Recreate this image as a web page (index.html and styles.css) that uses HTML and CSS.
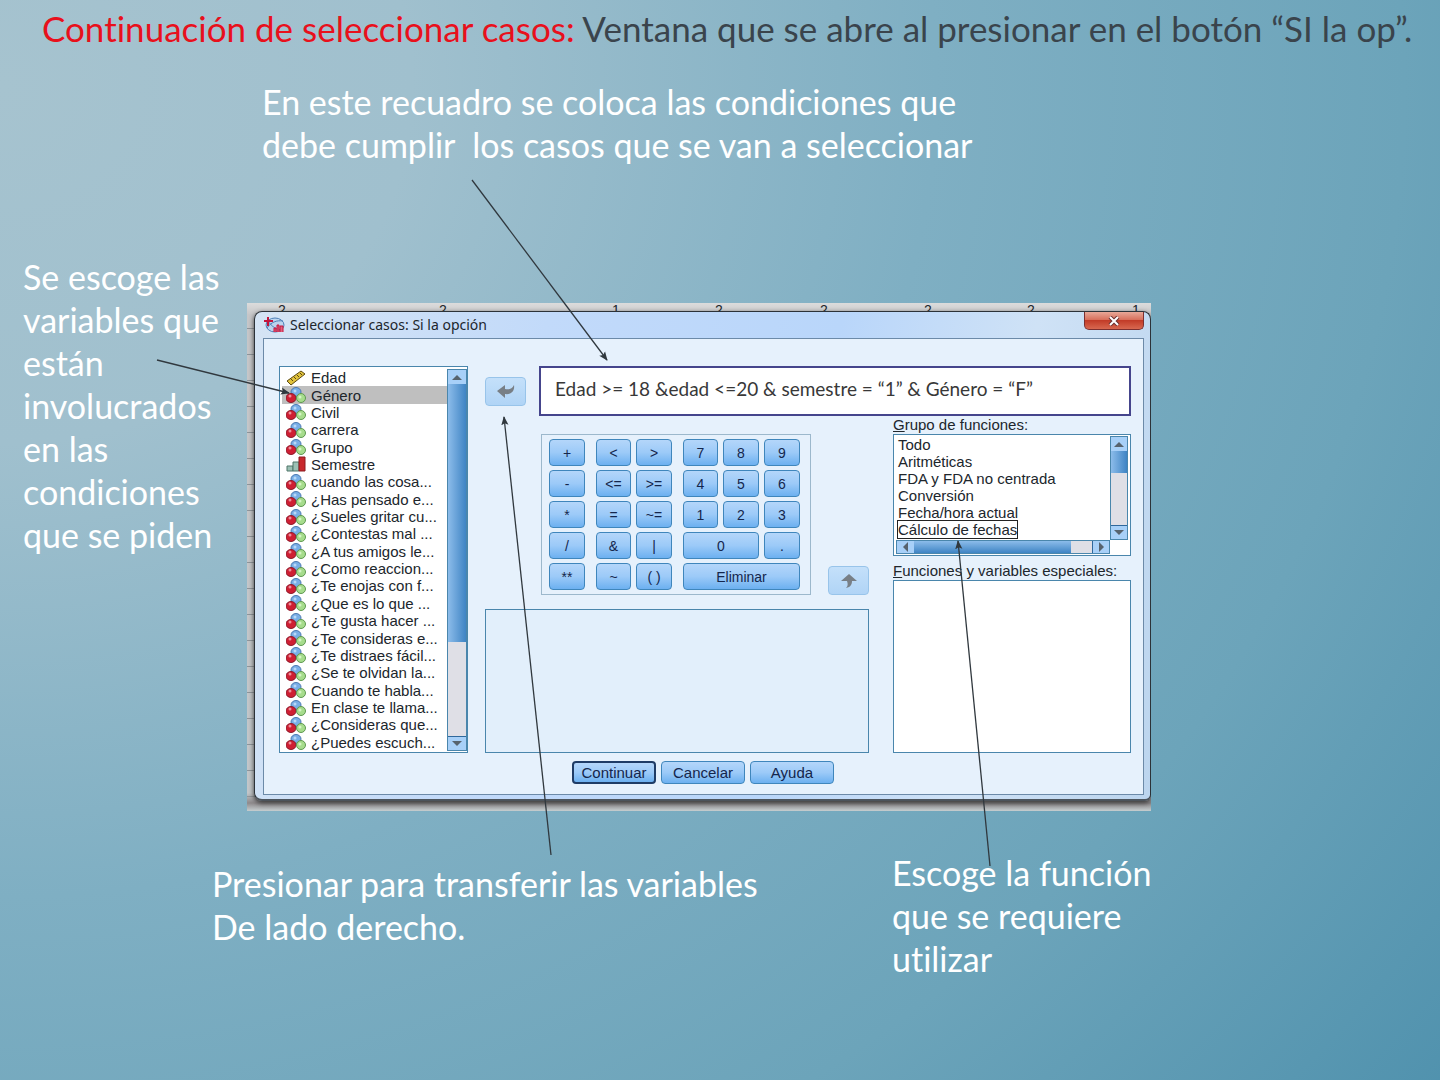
FILE: index.html
```html
<!DOCTYPE html>
<html lang="es">
<head>
    <meta charset="UTF-8">
    <meta name="viewport" content="width=device-width, initial-scale=1.0">
    <title>Seleccionar casos: Si la opción</title>
    <link rel="stylesheet" href="styles.css">
</head>
<body>
    <svg class="defs" aria-hidden="true">
        <symbol id="nominal" viewBox="0 0 20 16">
            <ellipse cx="10" cy="5" rx="5" ry="4.5" fill="#78aee6" stroke="#4b78b0"/>
            <ellipse cx="5" cy="11" rx="5" ry="4.5" fill="#cf1f33" stroke="#8d1a2a"/>
            <ellipse cx="15" cy="11" rx="4.5" ry="4.5" fill="#a6dc8c" stroke="#5f9850"/>
            <circle cx="4" cy="9" r="1.5" fill="#ee8f9a"/>
            <circle cx="9" cy="4" r="1.5" fill="#b8d8f8"/>
            <circle cx="14" cy="10" r="1.5" fill="#d4f4c4"/>
        </symbol>
        <symbol id="scale" viewBox="0 0 20 16">
            <path d="M1 11 15 1l4 3L5 15z" fill="#e0c23c" stroke="#5c4a14"/>
            <path d="m5 9 2 2m1-4 2 2m1-4 2 2m1-4 2 2" stroke="#5c4a14" fill="none"/>
        </symbol>
        <symbol id="ordinal" viewBox="0 0 20 16">
            <path d="M1 10h6v5H1z" fill="#9cc0b4" stroke="#4f7468"/>
            <path d="M7 6h6v9H7z" fill="#9cc0b4" stroke="#4f7468"/>
            <path d="M13 1h6v14h-6z" fill="#c8282c" stroke="#8c1a1e"/>
        </symbol>
    </svg>

    <main class="slide">
        <h1><span>Continuación de seleccionar casos:</span> Ventana que se abre al presionar en el botón “SI la op”.</h1>

        <p class="note note-top">En este recuadro se coloca las condiciones que<br>debe cumplir&nbsp; los casos que se van a seleccionar</p>

        <div class="middle">
            <p class="note note-left">Se escoge las<br>variables que<br>están<br>involucrados<br>en las<br>condiciones<br>que se piden</p>

            <div class="sheet">
                <div class="sheet-cols" aria-hidden="true">
                    <span>2</span><span>2</span><span>1</span><span>2</span><span>2</span><span>2</span><span>2</span><span>1</span>
                </div>
                <section class="window">
                    <header class="titlebar">
                        <svg class="logo" viewBox="0 0 22 18" aria-hidden="true">
                            <ellipse cx="12" cy="9" rx="9" ry="7" fill="#bcd4ee" stroke="#4c7fb8"/>
                            <path d="M4 12c4-6 10-8 16-7M5 5c4 6 9 9 14 9" stroke="#4c7fb8" fill="none"/>
                            <path d="M5 1v9M1 5h9" stroke="#c4143c" stroke-width="2"/>
                            <path d="M11 16v-4h2v4m1 0V9h2v7m1 0v-6h3v6" fill="#e0607c" stroke="#c4143c"/>
                        </svg>
                        <h2>Seleccionar casos: Si la opción</h2>
                        <button class="close" type="button" aria-label="Cerrar">
                            <svg viewBox="0 0 12 10" aria-hidden="true">
                                <path d="m2 1 8 8m0-8L2 9" stroke="#6b3030" stroke-width="4"/>
                                <path d="m2 1 8 8m0-8L2 9" stroke="#fff" stroke-width="2"/>
                            </svg>
                        </button>
                    </header>

                    <form class="pane">
                        <div class="content">
                            <div class="box variables">
                                <ul id="variables" role="listbox" aria-label="Variables"></ul>
                                <div class="scroll scroll-y"><i class="up"></i><b></b><i class="down"></i></div>
                            </div>

                            <div class="work">
                                <div class="condition">
                                    <button class="move" type="button" aria-label="Transferir variable">
                                        <svg viewBox="0 0 20 16" aria-hidden="true"><path d="M1 8 9 2v4c4 1 7 0 9-4 1 6-3 10-9 9v4z" fill="#787f86"/></svg>
                                    </button>
                                    <input type="text" aria-label="Condición" value="Edad &gt;= 18 &amp;edad &lt;=20 &amp; semestre = “1” &amp; Género = “F”">
                                </div>
                                <div class="lower">
                                    <div class="center">
                                        <div class="pad-row">
                                            <div class="keypad">
                                                <button type="button">+</button><button type="button" class="gap">&lt;</button><button type="button">&gt;</button><button type="button" class="gap">7</button><button type="button">8</button><button type="button">9</button>
                                                <button type="button">-</button><button type="button" class="gap">&lt;=</button><button type="button">&gt;=</button><button type="button" class="gap">4</button><button type="button">5</button><button type="button">6</button>
                                                <button type="button">*</button><button type="button" class="gap">=</button><button type="button">~=</button><button type="button" class="gap">1</button><button type="button">2</button><button type="button">3</button>
                                                <button type="button">/</button><button type="button" class="gap">&amp;</button><button type="button">|</button><button type="button" class="gap zero">0</button><button type="button">.</button>
                                                <button type="button">**</button><button type="button" class="gap">~</button><button type="button">( )</button><button type="button" class="gap clear">Eliminar</button>
                                            </div>
                                            <button class="move" type="button" aria-label="Insertar función">
                                                <svg viewBox="0 0 20 16" aria-hidden="true"><path d="m10 1 8 7h-5c0 3-1 6-6 7 2-2 2-4 1-7H2z" fill="#787f86"/></svg>
                                            </button>
                                        </div>
                                        <div class="box description"></div>
                                    </div>
                                    <div class="functions">
                                        <p id="group-label"><u>G</u>rupo de funciones:</p>
                                        <div class="box group">
                                            <ul role="listbox" aria-labelledby="group-label">
                                                <li role="option">Todo</li>
                                                <li role="option">Aritméticas</li>
                                                <li role="option">FDA y FDA no centrada</li>
                                                <li role="option">Conversión</li>
                                                <li role="option">Fecha/hora actual</li>
                                                <li role="option" class="focused"><span>Cálculo de fechas</span></li>
                                            </ul>
                                            <div class="scroll scroll-y"><i class="up"></i><b></b><i class="down"></i></div>
                                            <div class="scroll scroll-x"><i class="prev"></i><b></b><i class="next"></i></div>
                                        </div>
                                        <p class="special-label"><u>F</u>unciones y variables especiales:</p>
                                        <div class="box special"></div>
                                    </div>
                                </div>
                            </div>
                        </div>
                        <div class="actions">
                            <button type="button" class="default">Continuar</button>
                            <button type="button">Cancelar</button>
                            <button type="button">Ayuda</button>
                        </div>
                    </form>
                </section>
            </div>
        </div>

        <div class="bottom">
            <p class="note">Presionar para transferir las variables<br>De lado derecho.</p>
            <p class="note note-function">Escoge la función<br>que se requiere<br>utilizar</p>
        </div>

        <!-- arrows from each note to its control -->
        <svg class="arrows" viewBox="0 0 1440 1080" preserveAspectRatio="none" aria-hidden="true">
            <defs>
                <marker id="tip" viewBox="0 0 10 8" refX="9" refY="4" markerWidth="9" markerHeight="8" markerUnits="userSpaceOnUse" orient="auto">
                    <path d="M0 0 10 4 0 8 2 4z" fill="#30383e"/>
                </marker>
            </defs>
            <path d="M472 180 607 360"/>
            <path d="M157 360 289 393"/>
            <path d="M551 855 504 417"/>
            <path d="M990 866 958 541"/>
        </svg>
    </main>

    <script>
        const variables = [
            ['scale', 'Edad'], ['nominal', 'Género'], ['nominal', 'Civil'], ['nominal', 'carrera'],
            ['nominal', 'Grupo'], ['ordinal', 'Semestre'], ['nominal', 'cuando las cosa...'],
            ['nominal', '¿Has pensado e...'], ['nominal', '¿Sueles gritar cu...'], ['nominal', '¿Contestas mal ...'],
            ['nominal', '¿A tus amigos le...'], ['nominal', '¿Como reaccion...'], ['nominal', '¿Te enojas con f...'],
            ['nominal', '¿Que es lo que ...'], ['nominal', '¿Te gusta hacer ...'], ['nominal', '¿Te consideras e...'],
            ['nominal', '¿Te distraes fácil...'], ['nominal', '¿Se te olvidan la...'], ['nominal', 'Cuando te habla...'],
            ['nominal', 'En clase te llama...'], ['nominal', '¿Consideras que...'], ['nominal', '¿Puedes escuch...']
        ];

        document.getElementById('variables').innerHTML = variables.map(([icon, name]) =>
            `<li role="option" aria-selected="${name === 'Género'}"><svg><use href="#${icon}"/></svg>${name}</li>`
        ).join('');
    </script>
</body>
</html>
```
FILE: styles.css
```css
* { box-sizing: border-box; }
body { margin: 0; font-family: "Liberation Sans", Arial, sans-serif; font-size: 15px; color: #20262c; }
h1, h2, p, ul { margin: 0; padding: 0; font-weight: normal; }
ul { list-style: none; }
button { font: inherit; padding: 0; }
.defs { display: none; }

.slide {
    position: relative;
    min-height: 100vh;
    background: radial-gradient(ellipse 130% 150% at 0% 8%, #a6c3cf 0%, #a0c0ce 22%, #7fafc3 50%, #6ca4ba 75%, #4f91ad 100%);
}
h1, .note { font-family: Candara, Lato, sans-serif; font-variant-ligatures: none; white-space: nowrap; }
h1 { padding: 6px 0 0 42px; font-size: 35px; line-height: 44px; color: #3a444c; }
h1 span { color: #e8101c; }
.note { font-size: 34px; line-height: 43px; color: #fff; }
.note-top { padding: 30px 0 0 262px; }

.middle { display: grid; grid-template-columns: 247fr 904fr 289fr; margin-top: 89px; }
.note-left { padding-left: 23px; }
.bottom { display: grid; grid-template-columns: 680fr 548fr; margin-top: 40px; padding-left: 212px; }
.bottom .note { padding-top: 11px; }
.bottom .note-function { padding-top: 0; }

.sheet {
    margin-top: 48px;
    height: 508px;
    padding-left: 7px;
    overflow: hidden;
    background:
        repeating-linear-gradient(transparent 0 25px, #8f959a 25px 26px),
        linear-gradient(#dcdcdc, #c6c6c8 12px, #c2c6c9 490px, #8e8a8c 500px, #c5cdcf);
}
.sheet-cols { display: grid; grid-template-columns: 161fr 173fr 103fr 105fr 104fr 103fr 105fr 19fr; height: 8px; padding-left: 24px; overflow: hidden; font-size: 14px; line-height: 15px; }

.window {
    height: 490px;
    padding: 0 6px 7px 8px;
    border: 1px solid #2c3238;
    border-bottom: 2px solid #4c545c;
    border-radius: 8px 8px 6px 8px;
    background: linear-gradient(100deg, #d5e4f4, #c2dafa 30%, #b9d6fa 60%, #cfe2f6 80%, #bcd5ee);
    box-shadow: 0 2px 5px #333;
}
.titlebar { display: flex; align-items: center; height: 26px; }
.logo { width: 22px; height: 18px; }
.titlebar h2 { flex: 1; padding-left: 5px; font: 14px/20px "Noto Sans", sans-serif; }
.close { align-self: flex-start; width: 60px; height: 18px; border: 1px solid #7c3030; border-top: 0; border-radius: 0 0 5px 5px; background: linear-gradient(#e8a898, #d8705c 45%, #c23c28 50%, #d86850); }
.close svg { display: block; width: 12px; height: 10px; margin: auto; }

.pane { height: 457px; padding: 27px 12px 0 15px; border: 1px solid #6c8aa8; background: #e6f1fc; }
.content { display: grid; grid-template-columns: 189px 1fr; gap: 17px; height: 387px; }
.box { border: 1px solid #4a86ac; background: #fff; }

.variables { display: grid; grid-template-columns: minmax(0, 1fr) 20px; padding: 2px 0 1px 2px; }
.variables ul { display: flex; flex-direction: column; min-width: 0; }
.variables li { display: flex; flex: 1; align-items: center; gap: 5px; padding-left: 4px; line-height: 17px; white-space: nowrap; }
.variables li[aria-selected="true"] { background: #bfbfbf; }
.variables svg { width: 20px; height: 16px; flex: none; }

.scroll { display: flex; border: 1px solid #4a86ac; background: #dfdfe6; }
.scroll-y { flex-direction: column; }
.scroll i { display: flex; flex: none; align-items: center; justify-content: center; background: #a8d0f8; }
.scroll i::before { content: ""; border: 5px solid transparent; }
.scroll-y i { height: 14px; }
.scroll-y b { background: linear-gradient(90deg, #8cbcea, #3f84c4); }
.scroll-y .down { margin-top: auto; border-top: 1px solid #2f689c; }
.scroll-x .next { margin-left: auto; border-left: 1px solid #2f689c; }
.scroll-x i { width: 17px; }
.scroll-x b { width: 74%; background: linear-gradient(#8cbcea, #3f84c4); }
.scroll .up::before { border-top: 0; border-bottom-color: #57636e; }
.scroll .down::before { border-bottom: 0; border-top-color: #57636e; }
.scroll .prev::before { border-left: 0; border-right-color: #57636e; }
.scroll .next::before { border-right: 0; border-left-color: #57636e; }
.variables .scroll b { height: 68%; }

.work { display: flex; flex-direction: column; min-width: 0; }
.condition { display: flex; align-items: center; gap: 13px; height: 50px; }
.condition input { flex: 1; min-width: 0; height: 50px; padding: 0 14px 6px; border: 2px solid #45458c; background: #fff; font: 19px Candara, Lato, sans-serif; color: #383838; }
.move { width: 41px; height: 29px; border: 1px solid #98c4ea; border-radius: 4px; background: linear-gradient(#c4e0fa, #b0d4f6); }
.move svg { display: block; width: 20px; height: 16px; margin: auto; }

.lower { display: grid; grid-template-columns: 384fr 238fr; gap: 24px; flex: 1; }
.center { display: flex; flex-direction: column; padding-top: 18px; }
.pad-row { display: flex; justify-content: space-between; align-items: flex-end; padding-left: 56px; }
.keypad { display: grid; grid-template-columns: 36px 41px 36px 41px 36px 36px; grid-auto-rows: 27px; gap: 4px 5px; width: 270px; padding: 4px 7px; border: 1px solid #9cb8cc; }
.keypad button, .actions button {
    border: 1px solid #3f86bc;
    border-radius: 4px;
    background: linear-gradient(#b4d6fa, #9ccaf8 50%, #6cb0f0);
    color: #14264c;
}
.keypad button { font-size: 14px; }
.keypad .gap { margin-left: 6px; }
.keypad .zero { grid-column: span 2; }
.keypad .clear { grid-column: span 3; }
.description { flex: 1; margin-top: 14px; background: #e2effb; }

.functions { display: flex; flex-direction: column; min-width: 0; white-space: nowrap; }
.functions p { height: 18px; line-height: 18px; }
.functions .special-label { height: 24px; padding-top: 6px; }
.group { display: grid; grid-template-columns: 1fr 18px; grid-template-rows: 1fr 14px; height: 122px; padding: 1px 2px; }
.group li { padding-left: 2px; line-height: 17px; }
.group .focused span { outline: 1px solid #222; }
.group .scroll-y b { height: 22px; }
.special { flex: 1; }

.actions { display: flex; justify-content: center; gap: 5px; padding: 8px 4px 0 0; }
.actions button { width: 84px; height: 23px; }
.actions .default { border: 2px solid #1f3c66; }

.arrows { position: absolute; top: 0; left: 0; width: 100%; height: 1080px; pointer-events: none; }
.arrows > path { fill: none; stroke: #30383e; stroke-width: 1.3; vector-effect: non-scaling-stroke; marker-end: url(#tip); }
```
